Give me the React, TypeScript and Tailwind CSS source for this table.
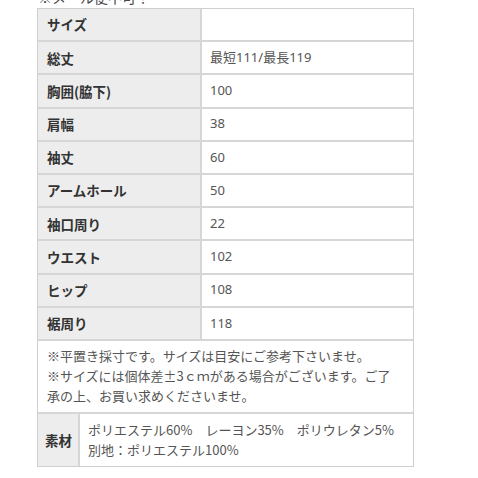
import React from 'react';

const rows: [string, string][] = [
  ['サイズ', ''],
  ['総丈', '最短111/最長119'],
  ['胸囲(脇下)', '100'],
  ['肩幅', '38'],
  ['袖丈', '60'],
  ['アームホール', '50'],
  ['袖口周り', '22'],
  ['ウエスト', '102'],
  ['ヒップ', '108'],
  ['裾周り', '118'],
];

const App: React.FC = () => {
  return (
    <div
      className="w-[478px] h-[478px] bg-white overflow-hidden"
      style={{ fontFamily: '"Noto Sans CJK JP", "Noto Sans", sans-serif' }}
    >
      <div className="pl-[38px] -mt-[10px] h-[15px] text-[14px] leading-[15px] text-[#444]">※メール便不可！</div>
      <div className="ml-[37px] mt-[3px] w-[377px] border border-[#cfcfcf]">
        {rows.map(([label, value]) => (
          <div key={label} className="grid grid-cols-[164px_1fr] h-[33.2px] border-b-2 border-[#d6d6d6]">
            <div className="bg-[#ededed] border-r-2 border-[#d6d6d6] flex items-center pl-[9px] text-[13.5px] font-bold text-[#333]">
              {label}
            </div>
            <div
              className="flex items-center pl-[8px] text-[13px] text-[#555]"
              style={{ fontFamily: '"Noto Sans", "Noto Sans CJK JP", sans-serif' }}
            >
              {value}
            </div>
          </div>
        ))}
        <div className="h-[73px] border-b-2 border-[#d6d6d6] px-[9px] pt-[5px] text-[13px] leading-[20px] text-[#555]">
          <div>※平置き採寸です。サイズは目安にご参考下さいませ。</div>
          <div className="whitespace-nowrap">※サイズには個体差±3ｃｍがある場合がございます。ご了</div>
          <div>承の上、お買い求めくださいませ。</div>
        </div>
        <div className="grid grid-cols-[42px_1fr] h-[52px]">
          <div className="bg-[#ededed] border-r-2 border-[#d6d6d6] flex items-center pl-[7px] text-[13.5px] font-bold text-[#333]">
            素材
          </div>
          <div className="flex flex-col justify-center pl-[8px] text-[13px] leading-[20px] text-[#555]">
            <div className="whitespace-nowrap">ポリエステル60%　レーヨン35%　ポリウレタン5%</div>
            <div>別地：ポリエステル100%</div>
          </div>
        </div>
      </div>
    </div>
  );
};

export default App;
